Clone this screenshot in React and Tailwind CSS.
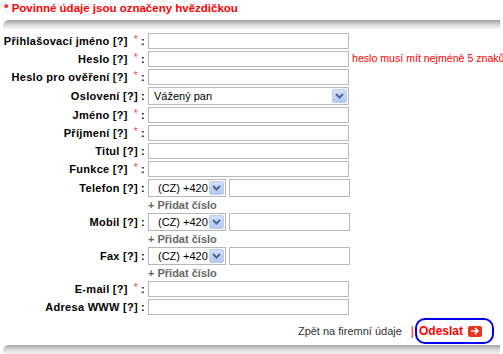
import React from "react";

function Arrow() {
  return (
    <div className="w-[15px] h-[14px] rounded-[2px] bg-linear-to-b from-[#d3e0fb] to-[#b4c9f3] border border-[#b9cbf0] flex items-center justify-center shrink-0">
      <svg width="9" height="6" viewBox="0 0 9 6">
        <path d="M1 1 L4.5 4.5 L8 1" stroke="#4d6591" strokeWidth="2" fill="none" />
      </svg>
    </div>
  );
}

function Label({ text, req }) {
  return (
    <div className="w-[145px] shrink-0 text-right font-bold text-[11px] text-black whitespace-nowrap tracking-[0.3px] leading-none">
      {text}
      {req ? (
        <span className="text-[#ff4040] font-normal text-[10px] relative -top-[2px] ml-[6px] mr-[3px]">*</span>
      ) : (
        <span className="inline-block w-[3px]" />
      )}
      :
    </div>
  );
}

function Input({ w = "w-[201px]" }) {
  return <div className={`${w} h-[16px] border border-[#b7b7b7] bg-white shrink-0`} />;
}

function Row({ label, req, children, tall }) {
  return (
    <div className={`flex items-center gap-[3px] ${tall ? "h-[20px]" : "h-[18px]"}`}>
      <Label text={label} req={req} />
      {children || <Input />}
    </div>
  );
}

function PhoneRow({ label }) {
  return (
    <>
      <Row label={label} tall>
        <div className="flex items-center gap-[3px]">
          <div className="w-[78px] h-[18px] border border-[#b7b7b7] flex items-center pl-[9px] pr-[1px] justify-between text-[11px] text-black">
            <span>(CZ) +420</span>
            <Arrow />
          </div>
          <div className="w-[121px] h-[18px] border border-[#b7b7b7]" />
        </div>
      </Row>
      <div className="h-[14px] flex items-center pl-[148px] text-[11px] font-bold text-[#666666] leading-none">
        + Přidat číslo
      </div>
    </>
  );
}

export default function App() {
  return (
    <div
      className="w-[503px] h-[354px] overflow-hidden bg-white relative"
      style={{ fontFamily: '"Liberation Sans", Arial, sans-serif' }}
    >
      <div className="h-[20px] pl-[4px] pt-[3px] text-[11.5px] font-bold text-[#ff0000] leading-none whitespace-nowrap">
        * Povinné údaje jsou označeny hvězdičkou
      </div>
      <div className="ml-[3px] w-[497px] h-[9px] rounded-tl-[6px] rounded-bl-[2px] bg-linear-to-b from-[#9d9d9d] via-[#d6d6d6] to-[#f7f7f7]" />
      <div className="mt-[3px] flex flex-col">
        <Row label="Přihlašovací jméno [?]" req />
        <Row label="Heslo [?]" req>
          <div className="flex items-center gap-[3px] whitespace-nowrap">
            <Input />
            <span className="text-[10.6px] text-[#ff0000]">heslo musí mít nejméně 5 znaků</span>
          </div>
        </Row>
        <Row label="Heslo pro ověření [?]" req />
        <Row label="Oslovení [?]" tall>
          <div className="w-[201px] h-[18px] border border-[#b7b7b7] flex items-center justify-between pl-[5px] pr-[1px] text-[11px] text-black">
            <span>Vážený pan</span>
            <Arrow />
          </div>
        </Row>
        <Row label="Jméno [?]" req />
        <Row label="Příjmení [?]" req />
        <Row label="Titul [?]" />
        <Row label="Funkce [?]" req />
        <PhoneRow label="Telefon [?]" />
        <PhoneRow label="Mobil [?]" />
        <PhoneRow label="Fax [?]" />
        <Row label="E-mail [?]" req />
        <Row label="Adresa WWW [?]" />
      </div>
      <div className="mt-[2px] h-[26px] flex items-center justify-end pr-[9px]">
        <span className="text-[11px] text-[#333333] mr-[9px]">Zpět na firemní údaje</span>
        <span className="text-[12px] text-[#ff0000] mr-[1px]">|</span>
        <div className="h-[26px] border-2 border-[#0000ee] rounded-[10px] flex items-center pl-[2px] pr-[10px]">
          <span className="text-[12px] font-bold text-[#ff0000]">Odeslat</span>
          <div className="ml-[5px] w-[14px] h-[11px] rounded-[2px] bg-[#e8351f] flex items-center justify-center">
            <svg width="10" height="8" viewBox="0 0 10 8">
              <path d="M1 4 H8 M5 1 L8 4 L5 7" stroke="#ffffff" strokeWidth="1.6" fill="none" />
            </svg>
          </div>
        </div>
      </div>
      <div className="ml-[3px] mt-[1px] w-[497px] h-[9px] rounded-tl-[6px] rounded-bl-[3px] rounded-br-[3px] bg-linear-to-b from-[#a5a5a5] via-[#d8d8d8] to-[#f5f5f5]" />
    </div>
  );
}
